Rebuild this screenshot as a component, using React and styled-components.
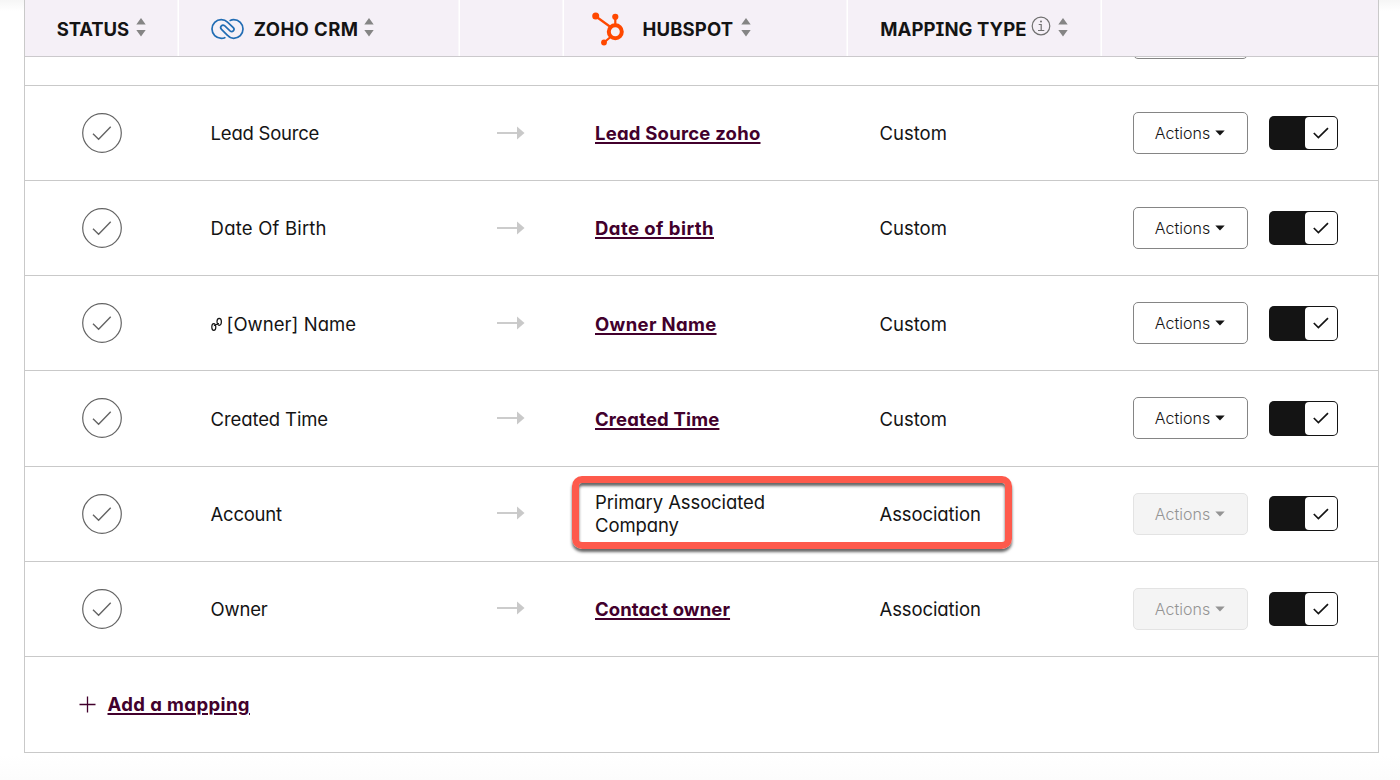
import React from "react";
import styled, { createGlobalStyle } from "styled-components";

const GlobalStyle = createGlobalStyle`
  *, *::before, *::after { box-sizing: border-box; }
  body {
    margin: 0;
    background: #fff;
    color: #141414;
    font-family: Inter, "Liberation Sans", sans-serif;
    font-size: 18.5px;
    font-feature-settings: "cv11";
    overflow: hidden;
  }
`;

const Page = styled.main`
  height: 780px;
  overflow: hidden;
  padding: 0 21px 0 24px;
  background:
    linear-gradient(#f6f6f6, rgba(255, 255, 255, 0) 11px),
    linear-gradient(#fff 755px, #fcfcfc 780px);
`;

const Table = styled.section`
  height: 753px;
  border: solid #c9c9c9;
  border-width: 0 1.5px 1.5px 1px;
  background: #fff;
`;

const columns = "154px 281px 103.5px 284px 254px 1fr";

const HeaderRow = styled.header`
  display: grid;
  grid-template-columns: ${columns};
  height: 57px;
`;

const HeaderCell = styled.div`
  display: flex;
  align-items: center;
  padding: 1px 0 0 ${(p) => p.$indent}px;
  background: #f5f0f7;
  border-bottom: 1px solid #cbc9cc;
  box-shadow: inset -1.5px 0 #fff;
  &:last-child { box-shadow: none; }
`;

const HeaderLabel = styled.span`
  font-weight: 700;
  line-height: 24px;
  white-space: nowrap;
  letter-spacing: ${(p) => p.$track || 0}px;
  font-feature-settings: "cv11", "cv08", "ss02";
`;

const SortSvg = styled.svg`
  flex: none;
  margin: -2px 0 0 ${(p) => p.$gap}px;
`;

const ZohoSvg = styled.svg`
  flex: none;
  margin-right: 10px;
`;

const HubspotSvg = styled.svg`
  flex: none;
  margin-right: 18px;
`;

const InfoSvg = styled.svg`
  flex: none;
  margin: -6px 0 0 4px;
`;

const ClippedRow = styled.div`
  display: flex;
  justify-content: flex-end;
  align-items: flex-start;
  height: 28px;
  padding-right: 130.5px;
  overflow: hidden;
`;

const Row = styled.div`
  position: relative;
  display: grid;
  grid-template-columns: ${columns};
  align-items: center;
  height: 95.15px;
  border-top: 1px solid #c9c9c9;
`;

const Cell = styled.div`
  padding-left: ${(p) => p.$indent}px;
  padding-top: ${(p) => (p.$flush ? 1 : 2)}px;
  line-height: 23.5px;
  letter-spacing: ${(p) => p.$track || 0}px;
`;

const StatusCell = styled.div`
  display: flex;
  justify-content: center;
`;

const ArrowCell = styled.div`
  display: flex;
  justify-content: center;
  padding: 0 1px 1px 0;
`;

const TwoLines = styled.div`
  width: 190px;
`;

const Link = styled.a`
  color: #42002c;
  font-weight: 700;
  text-decoration: underline;
  text-decoration-thickness: 1.5px;
  text-underline-offset: 1.5px;
  white-space: nowrap;
  letter-spacing: ${(p) => p.$track || 0}px;
`;

const Controls = styled.div`
  display: flex;
  align-items: center;
  gap: 21px;
  padding-left: 31px;
`;

const ActionButton = styled.button`
  display: flex;
  align-items: center;
  justify-content: center;
  gap: 5px;
  flex: none;
  width: 115px;
  height: 42px;
  padding: 0;
  border: 1px solid ${(p) => (p.disabled ? "#e3e3e3" : "#858585")};
  border-radius: 5px;
  background: ${(p) => (p.disabled ? "#f4f4f4" : "#fff")};
  color: ${(p) => (p.disabled ? "#949494" : "#141414")};
  font: 300 16px Inter, "Liberation Sans", sans-serif;
  font-feature-settings: "cv11";
`;

const HiddenTopButton = styled(ActionButton)`
  margin-top: -40.4px;
`;

const CaretSvg = styled.svg`
  flex: none;
`;

const Toggle = styled.div`
  display: flex;
  justify-content: flex-end;
  width: 69px;
  height: 34.5px;
  padding: 1px;
  border-radius: 5px;
  background: #141414;
`;

const Knob = styled.div`
  display: flex;
  align-items: center;
  justify-content: center;
  width: 32px;
  border-radius: 4px;
  background: #fff;
`;

const LinkGlyph = styled.svg`
  margin-right: 5px;
  vertical-align: 0;
`;

const Highlight = styled.div`
  position: absolute;
  left: 546.5px;
  top: 9.5px;
  width: 440px;
  height: 73px;
  border: 7px solid #fe5a4c;
  border-radius: 10px;
  box-shadow: 0 3px 3px rgba(0, 0, 0, 0.6), inset 0 3px 3px rgba(0, 0, 0, 0.6);
`;

const AddRow = styled.div`
  display: flex;
  align-items: center;
  height: 96px;
  gap: 11.5px;
  padding: 0 0 0 54px;
  border-top: 1px solid #c9c9c9;
`;

const Caret = () => (
  <CaretSvg width="10" height="6" viewBox="0 0 10 6">
    <path d="M.3 .5H9.700L5 5.500Z" fill="currentColor" />
  </CaretSvg>
);

const SortIcon = ({ gap }) => (
  <SortSvg $gap={gap} width="10" height="19" viewBox="0 0 10 19">
    <path d="M5 0L9.700 6.500H.3zM5 18.500L9.700 12H.3z" fill="#858585" />
  </SortSvg>
);

const ZohoIcon = () => (
  <ZohoSvg width="33" height="22" viewBox="0 0 33 22" fill="none" stroke="#226db4" strokeWidth="1.7" strokeLinecap="round">
    <path d="M13.8 19.7C12.7 20.2 11.600 20.3 10.300 20.300A9.300 9.300 0 1 1 10.300 1.700C13 1.700 15 2.700 16.500 4.200L22.300 9.700C24.300 11.700 21.500 15 19 12.800L13.800 7.900C11.300 5.700 8.200 9 10.500 11.300L16.500 17.300C18.200 19.200 20.200 20.300 22.700 20.300A9.300 9.300 0 1 0 22.700 1.700C21.400 1.700 20.300 1.900 19.200 2.400" />
  </ZohoSvg>
);

const HubspotIcon = () => (
  <HubspotSvg width="33" height="34" viewBox="0 0 33 34" fill="none" stroke="#ff4800">
    <circle cx="23.300" cy="19.800" r="6.500" strokeWidth="4" />
    <path d="M23.300 13V6M18.500 15L4 4.500M18.500 25L12 30.500" strokeWidth="2.200" />
    <g fill="#ff4800" stroke="none">
      <circle cx="3.700" cy="4" r="3.500" />
      <circle cx="23.300" cy="4.800" r="3.100" />
      <circle cx="12" cy="30.500" r="2.900" />
    </g>
  </HubspotSvg>
);

const InfoIcon = () => (
  <InfoSvg width="20" height="20" viewBox="0 0 20 20" fill="none" stroke="#707070">
    <circle cx="10" cy="10" r="8.800" strokeWidth="1.200" />
    <path d="M7.700 8.500H10.200V14.200M7 14.500H13.300" strokeWidth="1.200" />
    <circle cx="10" cy="5.600" r="1" fill="#707070" stroke="none" />
  </InfoSvg>
);

const StatusIcon = () => (
  <svg width="40" height="40" viewBox="0 0 40 40" fill="none" stroke="#646464" strokeWidth="1.200">
    <circle cx="20" cy="20" r="19.300" />
    <path d="M11 20.800L16.600 26.200L28.700 13.700" strokeWidth="1.400" />
  </svg>
);

const ArrowIcon = () => (
  <svg width="28" height="14" viewBox="0 0 28 14">
    <path d="M0 7H21" stroke="#ccc" strokeWidth="2" />
    <path d="M20 0.500L27.500 7L20 13.500Z" fill="#c9c9c9" />
  </svg>
);

const CheckIcon = () => (
  <svg width="16" height="12" viewBox="0 0 16 12" fill="none" stroke="#141414" strokeWidth="1.700">
    <path d="M.8 6L5.400 10.500L15 1.200" />
  </svg>
);

const LookupIcon = () => (
  <LinkGlyph width="11" height="14" viewBox="0 0 11 14" fill="none" stroke="#141414" strokeWidth="1.200">
    <ellipse cx="2.800" cy="10" rx="2" ry="3.300" />
    <ellipse cx="8.200" cy="4.800" rx="2.200" ry="3.500" />
    <path d="M2.800 8.800L8 6.300" strokeWidth="1" />
  </LinkGlyph>
);

const PlusIcon = () => (
  <svg width="17" height="17" viewBox="0 0 17 17" stroke="#42002c" strokeWidth="1.300">
    <path d="M8.500 .5V16.500M.5 8.500H16.500" />
  </svg>
);

const rows = [
  { source: "Lead Source", st: -0.23, target: "Lead Source zoho", tt: 0.22, type: "Custom" },
  { source: "Date Of Birth", st: 0.2, target: "Date of birth", tt: 0.46, type: "Custom" },
  { source: "[Owner] Name", st: 0.05, target: "Owner Name", tt: 0.34, type: "Custom", lookup: true },
  { source: "Created Time", st: -0.12, target: "Created Time", tt: 0.17, type: "Custom" },
  { source: "Account", st: -0.25, target: "Primary Associated Company", tt: -0.1, type: "Association", locked: true, plain: true },
  { source: "Owner", st: -0.2, target: "Contact owner", tt: 0.1, type: "Association", locked: true },
];

const MappingRow = ({ row }) => (
  <Row>
    <StatusCell><StatusIcon /></StatusCell>
    <Cell $indent={31.6} $track={row.st}>
      {row.lookup && <LookupIcon />}
      {row.source}
    </Cell>
    <ArrowCell><ArrowIcon /></ArrowCell>
    <Cell $indent={31.5} $track={row.tt} $flush={row.plain}>
      {row.plain ? <TwoLines>{row.target}</TwoLines> : <Link $track={row.tt}>{row.target}</Link>}
    </Cell>
    <Cell $indent={32} $track={row.locked ? -0.1 : 0}>{row.type}</Cell>
    <Controls>
      <ActionButton disabled={row.locked}>Actions<Caret /></ActionButton>
      <Toggle><Knob><CheckIcon /></Knob></Toggle>
    </Controls>
    {row.plain && <Highlight />}
  </Row>
);

export default function App() {
  return (
    <Page>
      <GlobalStyle />
      <Table>
        <HeaderRow>
          <HeaderCell $indent={31.7}><HeaderLabel $track={-0.1}>STATUS</HeaderLabel><SortIcon gap={7} /></HeaderCell>
          <HeaderCell $indent={31.7}><ZohoIcon /><HeaderLabel $track={0.4}>ZOHO CRM</HeaderLabel><SortIcon gap={6} /></HeaderCell>
          <HeaderCell />
          <HeaderCell $indent={28}><HubspotIcon /><HeaderLabel $track={0.15}>HUBSPOT</HeaderLabel><SortIcon gap={7.5} /></HeaderCell>
          <HeaderCell $indent={32.7}><HeaderLabel $track={0.08}>MAPPING TYPE</HeaderLabel><InfoIcon /><SortIcon gap={7.500} /></HeaderCell>
          <HeaderCell />
        </HeaderRow>
        <ClippedRow><HiddenTopButton aria-label="Row actions" /></ClippedRow>
        {rows.map((row) => <MappingRow key={row.source} row={row} />)}
        <AddRow><PlusIcon /><Link $track={0.4}>Add a mapping</Link></AddRow>
      </Table>
    </Page>
  );
}
